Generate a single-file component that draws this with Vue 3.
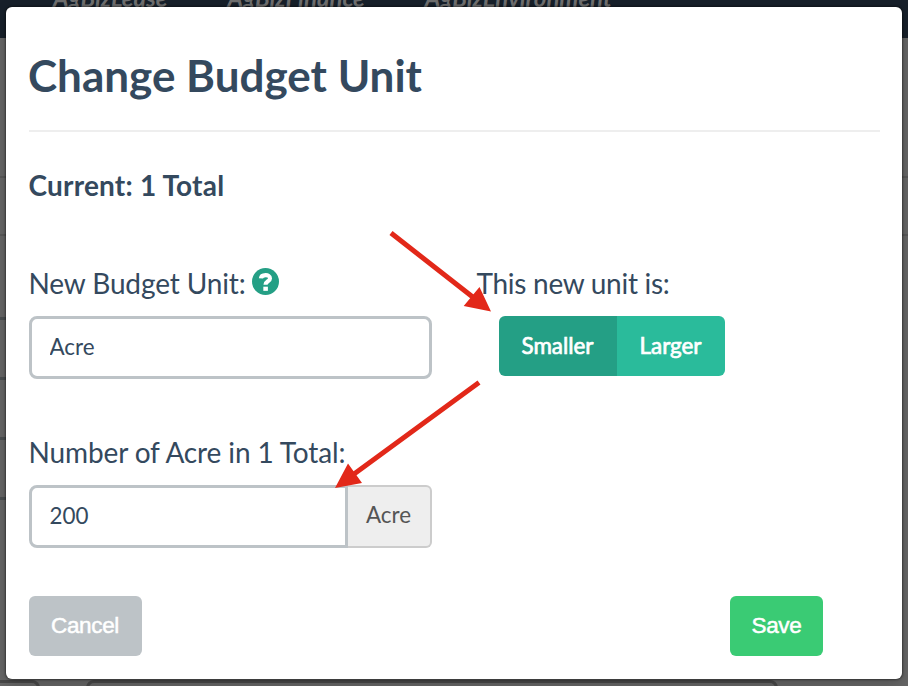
<script setup>
import { ref } from 'vue'

const navItems = ['AgBizLease', 'AgBizFinance', 'AgBizEnvironment']
const unit = ref('Acre')
const quantity = ref('200')
const size = ref('Smaller')
</script>

<template>
  <div class="screen">
    <div class="page">
      <nav class="navbar">
        <span v-for="item in navItems" :key="item" class="nav-item">{{ item }}</span>
      </nav>
      <div class="row row-first"></div>
      <div class="row row-second"></div>
      <div class="row row-third"></div>
      <div v-for="n in 3" :key="n" class="row row-field"></div>
      <div class="panels">
        <div class="panel panel-left"></div>
        <div class="panel panel-main"></div>
      </div>
    </div>

    <section class="modal" role="dialog">
      <h1>Change Budget Unit</h1>
      <h2>Current: 1 Total</h2>

      <div class="fields">
        <div class="field">
          <label>
            <span>New Budget Unit:</span>
            <svg class="help" viewBox="0 0 26 26">
              <circle cx="13" cy="13" r="13" />
              <path d="M8.600 10C9 6 17.300 5.600 17.300 10C17.300 13 13 12.700 13 16.200" />
              <rect x="10.900" y="18" width="4.400" height="4" />
            </svg>
          </label>
          <input v-model="unit" class="control" type="text" />
        </div>
        <div class="choice">
          <label>This new unit is:</label>
          <div class="toggle">
            <button
              v-for="option in ['Smaller', 'Larger']"
              :key="option"
              :class="{ active: size === option }"
              @click="size = option"
            >{{ option }}</button>
          </div>
        </div>
      </div>

      <div class="field quantity">
        <label>Number of {{ unit }} in 1 Total:</label>
        <div class="group">
          <input v-model="quantity" class="control" type="text" />
          <span class="addon">{{ unit }}</span>
        </div>
      </div>

      <footer>
        <button class="cancel">Cancel</button>
        <button class="save">Save</button>
      </footer>
    </section>

    <svg class="arrows" viewBox="0 0 908 686">
      <path class="shaft" d="M391 233L474 298M479 382.500L352 475.500" />
      <path class="head" d="M491 311.500L463.700 306L479.500 287ZM335 488L348 463.500L362 483Z" />
    </svg>
  </div>
</template>

<style>
body {
  margin: 0;
  overflow: hidden;
}
</style>

<style scoped>
* {
  box-sizing: border-box;
}
.screen {
  position: relative;
  display: grid;
  grid-template: 686px / 908px;
  font-family: Lato, "Liberation Sans", sans-serif;
  color: #34495e;
  overflow: hidden;
}
.page,
.modal {
  grid-area: 1 / 1;
}
.page {
  display: flex;
  flex-direction: column;
  background: #666;
}
.navbar {
  display: flex;
  flex: none;
  gap: 60px;
  height: 38px;
  padding-left: 53px;
  background: #17202a;
}
.nav-item {
  margin-top: -15px;
  font-size: 24px;
  line-height: 26px;
  font-weight: 700;
  font-style: italic;
  color: #6f6f6f;
}
.row {
  flex: none;
  border-bottom: 2px solid #585858;
}
.row-first {
  height: 140px;
}
.row-second {
  height: 58px;
}
.row-third {
  height: 84px;
  width: 20px;
  border-bottom: 3px solid #4b4f51;
}
.row-field {
  height: 60px;
  width: 20px;
  border-bottom: 3px solid #4b4f51;
}
.panels {
  display: flex;
  gap: 46px;
  margin-top: 180px;
}
.panel {
  flex: none;
  height: 30px;
  border: 3px solid #484848;
  border-radius: 8px;
}
.panel-left {
  width: 40px;
  border-left: 0;
  border-radius: 0 8px 0 0;
}
.panel-main {
  width: 692px;
}
.modal {
  display: flex;
  flex-direction: column;
  margin: 7px 6px;
  padding: 0 22px 0 23px;
  background: #fff;
  border-radius: 6px;
  box-shadow: 0 0 2px 1px rgba(0, 0, 0, 0.4), 0 5px 15px rgba(0, 0, 0, 0.2);
}
h1 {
  height: 125px;
  margin: 0;
  padding-top: 40px;
  border-bottom: 2px solid #eee;
  font-size: 44px;
  line-height: 56px;
  font-weight: 700;
  text-indent: -1px;
}
h2 {
  margin: 35px 0 0;
  font-size: 28px;
  line-height: 36px;
  font-weight: 700;
  letter-spacing: 0.200px;
  text-indent: -0.500px;
}
.fields {
  display: flex;
  gap: 45px;
  margin-top: 57px;
}
.field {
  width: 403px;
}
label {
  display: flex;
  align-items: center;
  gap: 6px;
  height: 46px;
  margin-left: -0.500px;
  font-size: 28px;
  line-height: 36px;
  letter-spacing: -0.120px;
}
.field label,
.choice label {
  margin-bottom: 10px;
}
.choice label {
  letter-spacing: -0.280px;
}
.help {
  width: 27px;
  height: 27px;
  margin-top: -3px;
  fill: #249f85;
}
.help path {
  fill: none;
  stroke: #fff;
  stroke-width: 4;
}
.help rect {
  fill: #fff;
}
.control {
  display: block;
  width: 100%;
  height: 63px;
  padding: 0 18px 2px 17.500px;
  border: 3px solid #bdc3c7;
  border-radius: 8px;
  outline: 0;
  background: #fff;
  color: #34495e;
  font: 22.400px/30px Lato, "Liberation Sans", sans-serif;
}
.toggle {
  display: flex;
  margin-left: 22px;
}
button {
  height: 60px;
  padding: 0;
  border: 0;
  color: #fff;
}
.toggle button {
  width: 108px;
  padding-right: 1px;
  background: #2abb9b;
  border-radius: 0 6px 6px 0;
  font: 22.400px/30px Lato, "Liberation Sans", sans-serif;
  -webkit-text-stroke: 0.700px #fff;
}
.toggle .active {
  width: 118px;
  background: #249f85;
  border-radius: 6px 0 0 6px;
}
.quantity {
  margin-top: 50px;
}
.group {
  display: flex;
}
.group .control {
  flex: 1;
  min-width: 0;
  border-radius: 8px 0 0 8px;
}
.addon {
  width: 84px;
  height: 63px;
  padding-right: 1px;
  border: 2px solid #ccc;
  border-left: 0;
  border-radius: 0 6px 6px 0;
  background: #eee;
  color: #555;
  font-size: 22.400px;
  line-height: 56px;
  text-align: center;
}
footer {
  display: flex;
  justify-content: space-between;
  margin-top: 48px;
  padding-right: 57px;
}
footer button {
  border-radius: 6px;
  font: 22.500px/30px "Liberation Sans", sans-serif;
  letter-spacing: -0.350px;
  -webkit-text-stroke: 0.500px #fff;
}
.cancel {
  width: 113px;
  padding-right: 1px;
  background: #bdc3c7;
}
.save {
  width: 93px;
  background: #3acb74;
}
.arrows {
  position: absolute;
  inset: 0;
  width: 908px;
  height: 686px;
  pointer-events: none;
}
.shaft {
  stroke: #e22819;
  stroke-width: 5;
}
.head {
  fill: #e22819;
}
</style>
